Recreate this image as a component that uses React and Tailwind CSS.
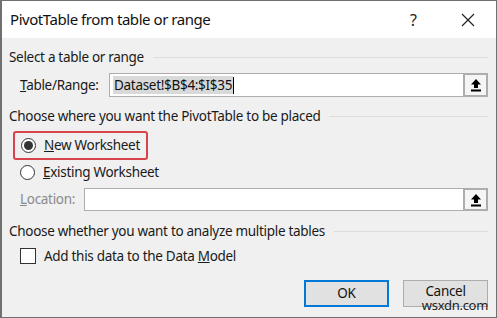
import React from 'react';

const font = { fontFamily: '"Noto Sans", "Open Sans", sans-serif' };

function SectionHeader({ children, className = '' }) {
  return (
    <div className={`flex items-center h-[20px] ${className}`}>
      <span className="whitespace-nowrap text-[13.5px] tracking-[-0.3px] text-[#1a1a1a]">{children}</span>
      <div className="flex-1 ml-[9px] mr-[8px] h-px bg-[#dcdcdc]" />
    </div>
  );
}

function CollapseButton() {
  return (
    <div className="w-[25px] h-full border-2 border-[#adadad] bg-[#f5f5f5] flex items-center justify-center">
      <svg width="12" height="14" viewBox="0 0 12 14">
        <path d="M6 1 L11 6.5 L8 6.5 L8 10 L4 10 L4 6.5 L1 6.5 Z" fill="#000" />
        <rect x="1" y="11.5" width="10" height="2" fill="#000" />
      </svg>
    </div>
  );
}

const txt = 'whitespace-nowrap text-[13.5px] tracking-[-0.3px]';

export default function App() {
  return (
    <div
      className="w-[497px] h-[318px] bg-[#f0f0f0] border border-[#707070] border-l-2 flex flex-col overflow-hidden"
      style={font}
    >
      {/* title bar */}
      <div className="h-[37px] bg-white flex items-center pl-[8px] shrink-0">
        <span className="text-[15px] tracking-[-0.45px] text-[#111] whitespace-nowrap">PivotTable from table or range</span>
        <span className="ml-auto mr-[44px] text-[16px] text-[#222]">?</span>
        <svg className="mr-[21px]" width="14" height="14" viewBox="0 0 14 14">
          <path d="M1 1 L13 13 M13 1 L1 13" stroke="#222" strokeWidth="1.2" />
        </svg>
      </div>

      <div className="flex flex-col pl-[7px]">
        <SectionHeader className="mt-[9px]">Select a table or range</SectionHeader>

        <div className="flex items-center mt-[6px] h-[24px]">
          <span className={`w-[100px] shrink-0 pl-[11px] text-[#1a1a1a] ${txt}`}>
            <span className="underline">T</span>able/Range:
          </span>
          <div className="flex h-full flex-1 mr-[8px]">
            <div className="flex-1 bg-white border border-[#adadad] border-r-0 flex items-center pl-[3px]">
              <span className={`bg-[#d9d9d9] text-[#111] leading-[18px] px-[1px] ${txt}`}>Dataset!$B$4:$I$35</span>
              <span className="w-px h-[17px] bg-black" />
            </div>
            <CollapseButton />
          </div>
        </div>

        <SectionHeader className="mt-[9px]">Choose where you want the PivotTable to be placed</SectionHeader>

        <div className="mt-[5px] ml-[4px] w-[135px] h-[29px] border-2 border-[#d9434a] rounded-[3px] flex items-center pl-[6px]">
          <span className="w-[15px] h-[15px] shrink-0 rounded-full border border-[#333] bg-white flex items-center justify-center">
            <span className="w-[9px] h-[9px] rounded-full bg-[#333]" />
          </span>
          <span className={`ml-[8px] text-[#1a1a1a] ${txt}`}>
            <span className="underline">N</span>ew Worksheet
          </span>
        </div>

        <div className="mt-[2px] h-[20px] flex items-center pl-[11px]">
          <span className="w-[15px] h-[15px] shrink-0 rounded-full border border-[#333] bg-white" />
          <span className={`ml-[8px] text-[#1a1a1a] ${txt}`}>
            <span className="underline">E</span>xisting Worksheet
          </span>
        </div>

        <div className="flex items-center mt-[6px] h-[23px]">
          <span className={`w-[75px] shrink-0 pl-[11px] text-[#8a8a8a] ${txt}`}>
            <span className="underline">L</span>ocation:
          </span>
          <div className="flex h-full flex-1 mr-[8px]">
            <div className="flex-1 bg-white border border-[#adadad] border-r-0" />
            <CollapseButton />
          </div>
        </div>

        <SectionHeader className="mt-[10px]">Choose whether you want to analyze multiple tables</SectionHeader>

        <div className="mt-[7px] h-[16px] flex items-center pl-[11px]">
          <span className="w-[16px] h-[16px] shrink-0 border border-[#333] bg-white" />
          <span className={`ml-[8px] text-[#1a1a1a] ${txt}`}>
            Add this data to the Data <span className="underline">M</span>odel
          </span>
        </div>

        <div className="mt-[16px] h-[27px] flex justify-end pr-[8px] gap-[14px] relative">
          <div className={`w-[85px] h-full border-2 border-[#0078d7] bg-[#e1e1e1] flex items-center justify-center text-[#111] ${txt}`}>
            OK
          </div>
          <div className={`w-[85px] h-full border border-[#adadad] bg-[#e1e1e1] flex items-center justify-center text-[#111] pb-[5px] ${txt}`}>
            Cancel
          </div>
          <span className="absolute right-[8px] top-[18px] text-[13px] leading-[14px] text-[#222] tracking-[-0.3px]">wsxdn.com</span>
        </div>
      </div>
    </div>
  );
}
